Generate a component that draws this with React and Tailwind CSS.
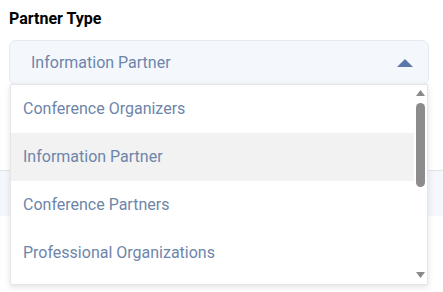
import React from 'react';

const options = [
  'Conference Organizers',
  'Information Partner',
  'Conference Partners',
  'Professional Organizations',
];

const App = () => {
  const selected = 'Information Partner';

  return (
    <div className="w-[443px] h-[292px] bg-white overflow-hidden font-['Roboto',sans-serif]">
      <div className="pt-[9px]">
        <p className="px-[9px] text-[16px] font-bold text-black leading-[19px]">Partner Type</p>

        <div className="relative mx-[9px] mt-[12px]">
          <div className="h-[45px] w-[420px] rounded-[7px] border border-[#e2eaf3] bg-[#f4f8fd] flex items-center justify-between pl-[21px] pr-[15px]">
            <span className="text-[16px] text-[#6e85aa]">{selected}</span>
            <svg width="16" height="8" viewBox="0 0 16 8">
              <path d="M0 8 L8 0 L16 8 Z" fill="#5b78a8" />
            </svg>
          </div>

          {/* open menu */}
          <div className="absolute left-[1px] top-[44px] w-[418px] h-[201px] bg-white border border-[#e6e6e6] shadow-[0_2px_6px_rgba(0,0,0,0.12)] flex z-10">
            <ul className="flex-1">
              {options.map((opt) => (
                <li
                  key={opt}
                  className={`h-[48px] flex items-center pl-[12px] text-[16px] text-[#6e85aa] ${
                    opt === selected ? 'bg-[#f2f2f2]' : ''
                  }`}
                >
                  {opt}
                </li>
              ))}
            </ul>
            <div className="w-[13px] flex flex-col items-center pt-[5px] pb-[6px]">
              <svg width="9" height="6" viewBox="0 0 9 6">
                <path d="M0 6 L4.5 0 L9 6 Z" fill="#8a8a8a" />
              </svg>
              <div className="mt-[7px] w-[9px] h-[84px] rounded-full bg-[#8c8c8c]" />
              <div className="flex-1" />
              <svg width="9" height="6" viewBox="0 0 9 6">
                <path d="M0 0 L9 0 L4.5 6 Z" fill="#8a8a8a" />
              </svg>
            </div>
          </div>
        </div>

        {/* field hidden behind the menu */}
        <div className="mt-[85px] h-[46px] border-t border-[#e2e6ea] bg-[#f4f8fd]" />
      </div>
    </div>
  );
};

export default App;
